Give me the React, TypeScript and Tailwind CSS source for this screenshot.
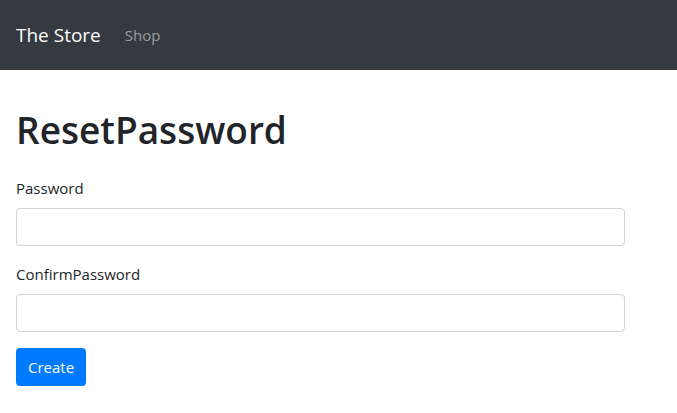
export default function App() {
  return (
    <div className="min-h-screen bg-white text-[#212529] font-['Segoe_UI','Open_Sans',sans-serif]">
      <nav className="flex h-[70px] items-center bg-[#343a40] px-4">
        <a className="mr-6 text-[19px] leading-[30px] text-white">The Store</a>
        <a className="text-[15px] leading-6 text-white/50">Shop</a>
      </nav>
      <main className="px-4 pt-[36px]">
        <h1 className="mb-[22px] text-[37px] leading-[48px] font-semibold">ResetPassword</h1>
        <form className="w-[609px]">
          <div className="mb-4">
            <label className="mb-2 block text-[15px] leading-6">Password</label>
            <input
              type="password"
              className="block h-[38px] w-full rounded border border-[#ced4da] bg-white px-3"
            />
          </div>
          <div className="mb-4">
            <label className="mb-2 block text-[15px] leading-6">ConfirmPassword</label>
            <input
              type="password"
              className="block h-[38px] w-full rounded border border-[#ced4da] bg-white px-3"
            />
          </div>
          <button
            type="submit"
            className="h-[38px] rounded bg-[#007bff] px-3 text-[15px] text-white"
          >
            Create
          </button>
        </form>
      </main>
    </div>
  );
}
